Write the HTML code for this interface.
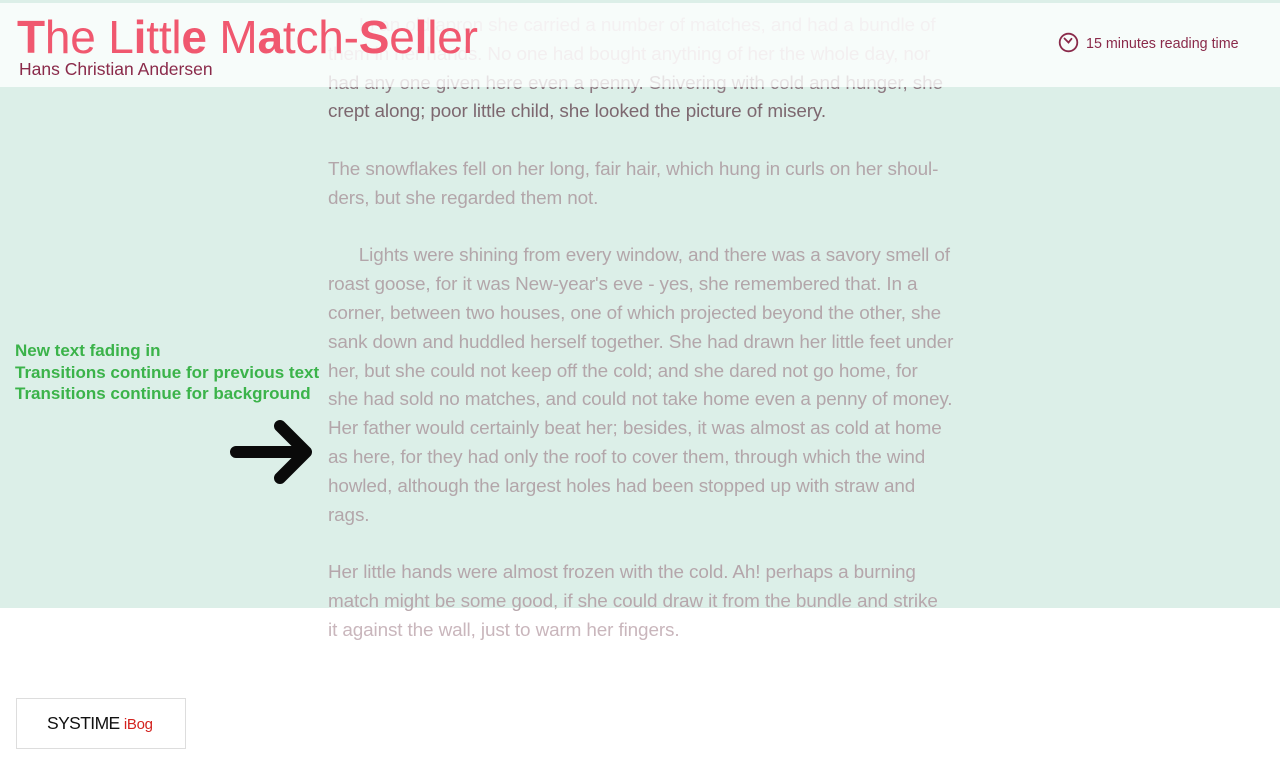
<!DOCTYPE html>
<html><head><meta charset="utf-8"><style>
html,body{margin:0;padding:0;width:1280px;height:769px;overflow:hidden;background:#fff;font-family:"Liberation Sans",sans-serif;position:relative}
.bg{position:absolute;left:0;top:0;width:1280px;height:608px;background:#dcefe8}
.txt{position:absolute;left:328px;top:12px;font-size:18.9px;line-height:28.8px;color:#b3a6aa;white-space:nowrap;letter-spacing:-0.12px}
.txt div{height:28.8px}
.hdr{position:absolute;left:0;top:3px;width:1280px;height:84px;background:rgba(255,255,255,0.78)}
.title{position:absolute;left:17px;top:10px;font-size:46px;color:#f0586f;letter-spacing:-0.2px;white-space:nowrap}
.title b{font-weight:bold}
.author{position:absolute;left:19px;top:59px;font-size:17.5px;color:#8a2a4a}
.time{position:absolute;left:1058px;top:32px;font-size:14.3px;color:#8a2a4a;white-space:nowrap}
.time svg{vertical-align:-5px;margin-right:7px}
.notes{position:absolute;left:15px;top:340px;font-size:17px;line-height:21.5px;font-weight:bold;color:#3bb34a;white-space:nowrap}
.logo{position:absolute;left:16px;top:698px;width:170px;height:51px;border:1.5px solid #ddd;box-sizing:border-box}
</style></head><body>
<div class="bg"></div>
<div class="txt">
<div style="color:#cdbfc3">&nbsp;&nbsp;&nbsp;&nbsp;&nbsp;&nbsp;In an old apron she carried a number of matches, and had a bundle of</div>
<div style="color:#c7b4ba">them in her hands. No one had bought anything of her the whole day, nor</div>
<div style="color:#8e7a82">had any one given here even a penny. Shivering with cold and hunger, she</div>
<div style="color:#7d6870">crept along; poor little child, she looked the picture of misery.</div>
<div></div>
<div>The snowflakes fell on her long, fair hair, which hung in curls on her shoul-</div>
<div>ders, but she regarded them not.</div>
<div></div>
<div>&nbsp;&nbsp;&nbsp;&nbsp;&nbsp;&nbsp;Lights were shining from every window, and there was a savory smell of</div>
<div>roast goose, for it was New-year's eve - yes, she remembered that. In a</div>
<div>corner, between two houses, one of which projected beyond the other, she</div>
<div>sank down and huddled herself together. She had drawn her little feet under</div>
<div>her, but she could not keep off the cold; and she dared not go home, for</div>
<div>she had sold no matches, and could not take home even a penny of money.</div>
<div>Her father would certainly beat her; besides, it was almost as cold at home</div>
<div>as here, for they had only the roof to cover them, through which the wind</div>
<div>howled, although the largest holes had been stopped up with straw and</div>
<div>rags.</div>
<div></div>
<div style="color:#b5a6ab">Her little hands were almost frozen with the cold. Ah! perhaps a burning</div>
<div style="color:#b7a7ac">match might be some good, if she could draw it from the bundle and strike</div>
<div style="color:#c9b6bc">it against the wall, just to warm her fingers.</div>
</div>
<div class="hdr"></div>
<div class="title"><b>T</b>he L<b>i</b>ttl<b>e</b> M<b>a</b>tch-<b>S</b>e<b>l</b>ler</div>
<div class="author">Hans Christian Andersen</div>
<div class="time"><svg width="21" height="21" viewBox="0 0 21 21"><circle cx="10.5" cy="10.5" r="8.8" fill="none" stroke="#8a2a4a" stroke-width="1.8"/><path d="M6.5 6.5 L10.5 10.5 L13.5 6.8" fill="none" stroke="#8a2a4a" stroke-width="1.8" stroke-linecap="round"/></svg>15 minutes reading time</div>
<div class="notes">New text fading in<br>Transitions continue for previous text<br>Transitions continue for background</div>
<svg style="position:absolute;left:230px;top:418px" width="86" height="68" viewBox="0 0 86 68"><path d="M6 34 H76 M50 8 L76 34 L50 60" fill="none" stroke="#0a0a0a" stroke-width="12" stroke-linecap="round" stroke-linejoin="round"/></svg>
<div class="logo"><div style="position:absolute;left:30px;top:14px;font-size:17.5px;color:#111;letter-spacing:-0.6px;white-space:nowrap">SYSTIME <span style="color:#d3221e;font-size:15px;letter-spacing:-0.3px">iBog</span></div></div>
</body></html>
